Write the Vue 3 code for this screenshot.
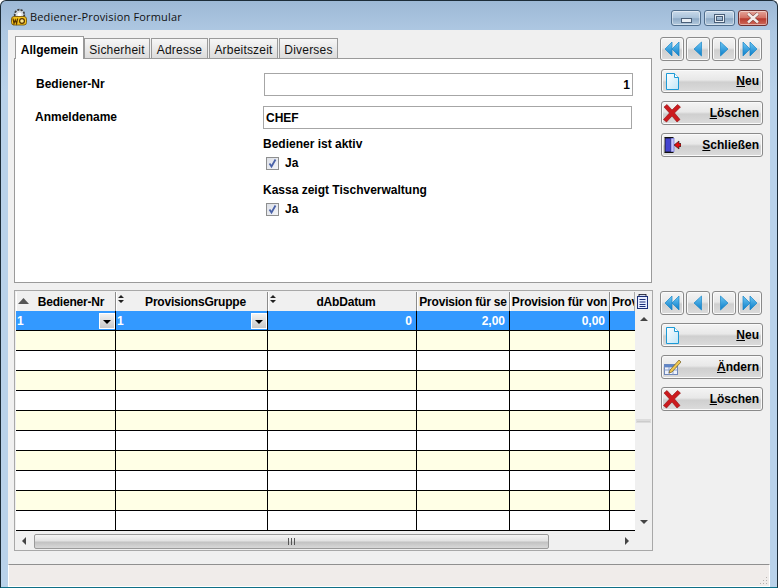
<script setup>
const tabs = [
  { label: 'Allgemein', width: 69, active: true },
  { label: 'Sicherheit', width: 66 },
  { label: 'Adresse', width: 57 },
  { label: 'Arbeitszeit', width: 69 },
  { label: 'Diverses', width: 59 },
]
const columns = [
  { label: 'Bediener-Nr', width: 100, sort: 'up' },
  { label: 'ProvisionsGruppe', width: 152, sort: 'both' },
  { label: 'dAbDatum', width: 149, sort: 'both' },
  { label: 'Provision für se', width: 93 },
  { label: 'Provision für von', width: 100 },
  { label: 'Prov', width: 25, clip: true },
]
const firstRow = [
  { text: '1', drop: true },
  { text: '1', drop: true },
  { text: '0', right: true },
  { text: '2,00', right: true },
  { text: '0,00', right: true },
  { text: '' },
]
const emptyRows = Array.from({ length: 10 }, (_, i) => i)
const navs = ['first', 'prev', 'next', 'last']
const topButtons = [
  { key: 'L0', icon: 'doc', mn: 'N', rest: 'eu' },
  { key: 'L1', icon: 'x', mn: 'L', rest: 'öschen' },
  { key: 'L2', icon: 'door', mn: 'S', rest: 'chließen' },
]
const bottomButtons = [
  { key: 'B0', icon: 'doc', mn: 'N', rest: 'eu' },
  { key: 'B1', icon: 'edit', mn: 'Ä', rest: 'ndern' },
  { key: 'B2', icon: 'x', mn: 'L', rest: 'öschen' },
]
</script>

<template>
  <div class="window">
    <header class="titlebar">
      <svg class="app-icon" width="18" height="18" viewBox="0 0 18 18">
        <circle cx="9.500" cy="6.500" r="4.800" fill="#d8dce0" stroke="#3e3e3e" stroke-width="1.800" stroke-dasharray="2.200 1.100" />
        <circle cx="9.500" cy="6.500" r="2" fill="#fff" />
        <rect x="1.500" y="8.500" width="15" height="8.500" rx="2.500" fill="#f3c21b" stroke="#6b4a00" stroke-width=".8" />
        <path d="M3 10.500l1 5 1.300-3.500 1.300 3.500 1-5" fill="none" stroke="#553300" stroke-width="1.200" />
        <circle cx="12" cy="13" r="2.400" fill="#fbe58a" stroke="#553300" stroke-width="1.200" />
      </svg>
      <span class="title">Bediener-Provision Formular</span>
      <div class="caption-buttons">
        <div class="cap cap-min"><span class="glyph-min"></span></div>
        <div class="cap cap-max"><span class="glyph-max"></span></div>
        <div class="cap cap-close">
          <svg width="16" height="12" viewBox="0 0 16 12">
            <path d="M3 1.500l10 9M13 1.500l-10 9" stroke="#6e3a36" stroke-width="3.600" />
            <path d="M3 1.500l10 9M13 1.500l-10 9" stroke="#f4ece9" stroke-width="2.600" />
          </svg>
        </div>
      </div>
    </header>

    <div class="client">
      <div class="main">
        <div class="left">
          <nav class="tabs">
            <div
              v-for="t in tabs"
              :key="t.label"
              class="tab"
              :class="{ active: t.active }"
              :style="{ width: t.width + 'px' }"
            >{{ t.label }}</div>
          </nav>
          <section class="panel">
            <div class="form-row first">
              <label class="lbl lbl-a">Bediener-Nr</label>
              <div class="input num">1</div>
            </div>
            <div class="form-row second">
              <label class="lbl lbl-b">Anmeldename</label>
              <div class="input text">CHEF</div>
            </div>
            <div class="check-block b1">
              <div class="check-title">Bediener ist aktiv</div>
              <div class="check-line">
                <span class="checkbox">
                  <svg width="11" height="11" viewBox="0 0 11 11"><path d="M2.500 5.500l2 3 4-7" fill="none" stroke="#4a62a8" stroke-width="1.800" /></svg>
                </span>
                <span>Ja</span>
              </div>
            </div>
            <div class="check-block b2">
              <div class="check-title">Kassa zeigt Tischverwaltung</div>
              <div class="check-line">
                <span class="checkbox">
                  <svg width="11" height="11" viewBox="0 0 11 11"><path d="M2.500 5.500l2 3 4-7" fill="none" stroke="#4a62a8" stroke-width="1.800" /></svg>
                </span>
                <span>Ja</span>
              </div>
            </div>
          </section>

          <section class="grid-box">
            <div class="grid-top">
              <div class="thead">
                <div
                  v-for="c in columns"
                  :key="c.label"
                  class="th"
                  :class="{ clip: c.clip, 'has-up': c.sort === 'up', 'has-both': c.sort === 'both' }"
                  :style="{ width: c.width + 'px' }"
                >
                  <svg v-if="c.sort === 'up'" class="sort-up" width="11" height="6" viewBox="0 0 11 6"><path d="M5.500 0L11 6H0z" fill="#555" /></svg>
                  <svg v-if="c.sort === 'both'" class="sort-both" width="6" height="8" viewBox="0 0 6 8"><path d="M3 0l3 3H0zM3 8L0 5h6z" fill="#222" /></svg>
                  <span>{{ c.label }}</span>
                </div>
              </div>
              <div class="corner">
                <svg width="13" height="15" viewBox="0 0 13 15">
                  <rect x="3" y=".5" width="7" height="2" fill="#cfd8f0" stroke="#112" stroke-width=".8" />
                  <rect x="1.500" y="2.500" width="10" height="12" fill="#e8eeff" stroke="#1c2f78" />
                  <path d="M3.500 5.500h6M3.500 8h6M3.500 10.500h6M3.500 12.500h6" stroke="#1c2f78" />
                </svg>
              </div>
            </div>
            <div class="grid-mid">
              <div class="rows">
                <div class="row selected">
                  <div
                    v-for="(c, i) in columns"
                    :key="c.label"
                    class="td"
                    :class="{ right: firstRow[i].right }"
                    :style="{ width: c.width + 'px' }"
                  >
                    <span>{{ firstRow[i].text }}</span>
                    <span v-if="firstRow[i].drop" class="drop">
                      <svg width="8" height="4" viewBox="0 0 8 4"><path d="M0 0h8L4 4z" fill="#000" /></svg>
                    </span>
                  </div>
                </div>
                <div v-for="r in emptyRows" :key="r" class="row" :class="{ cream: r % 2 === 0 }">
                  <div v-for="c in columns" :key="c.label" class="td" :style="{ width: c.width + 'px' }"></div>
                </div>
              </div>
              <div class="vscroll">
                <svg width="8" height="4" viewBox="0 0 8 4"><path d="M4 0l4 4H0z" fill="#444" /></svg>
                <span class="vthumb"></span>
                <svg width="8" height="4" viewBox="0 0 8 4"><path d="M0 0h8L4 4z" fill="#444" /></svg>
              </div>
            </div>
            <div class="hscroll">
              <svg class="harrow" width="4" height="8" viewBox="0 0 4 8"><path d="M4 0v8L0 4z" fill="#444" /></svg>
              <div class="hthumb"><span class="grip"></span></div>
              <svg class="harrow" width="4" height="8" viewBox="0 0 4 8"><path d="M0 0v8l4-4z" fill="#444" /></svg>
            </div>
          </section>
        </div>

        <aside class="side">
          <div class="group">
            <div class="nav-row">
              <button v-for="n in navs" :key="n" class="nav-btn" type="button">
                <svg width="18" height="18" viewBox="0 0 18 18">
                  <defs>
                    <linearGradient :id="'gt' + n" x1="0" y1="0" x2="0" y2="1">
                      <stop offset="0" stop-color="#6fc8f4" /><stop offset="1" stop-color="#0a7cc8" />
                    </linearGradient>
                  </defs>
                  <path v-if="n === 'first'" d="M9 2L2 9l7 7zM16 2L9 9l7 7z" :fill="'url(#gt' + n + ')'" stroke="#1785c8" stroke-width=".7" />
                  <path v-if="n === 'prev'" d="M12.500 2L5 9l7.500 7z" :fill="'url(#gt' + n + ')'" stroke="#1785c8" stroke-width=".7" />
                  <path v-if="n === 'next'" d="M5.500 2L13 9l-7.500 7z" :fill="'url(#gt' + n + ')'" stroke="#1785c8" stroke-width=".7" />
                  <path v-if="n === 'last'" d="M2 2l7 7-7 7zM9 2l7 7-7 7z" :fill="'url(#gt' + n + ')'" stroke="#1785c8" stroke-width=".7" />
                </svg>
              </button>
            </div>
            <button v-for="b in topButtons" :key="b.key" class="cmd" type="button">
              <svg class="ic" width="18" height="20" viewBox="0 0 18 20">
                <defs>
                  <linearGradient :id="'d' + b.key" x1="0" y1="0" x2="1" y2="1">
                    <stop offset="0" stop-color="#ffffff" /><stop offset="1" stop-color="#bfe6f8" />
                  </linearGradient>
                </defs>
                <template v-if="b.icon === 'doc'">
                  <path d="M3.500 2.500h8l4 4v12h-12z" :fill="'url(#d' + b.key + ')'" stroke="#1c9ad6" />
                  <path d="M11.500 2.500v4h4" fill="#fff" stroke="#1c9ad6" />
                </template>
                <path v-if="b.icon === 'x'" d="M1 4l3-2.500 5 5.500 5.500-5.500 3 2.500-6 6 5.500 6.500-3 2.500-5-6-5.500 6-3-2.500 6-6.500z" fill="#cc1a1e" stroke="#8f1010" stroke-width=".6" />
                <template v-if="b.icon === 'door'">
                  <path d="M1.500 2.500h9M1.500 17.500h9" stroke="#111" />
                  <rect x="2" y="3" width="6" height="14" fill="#4444d0" stroke="#111" stroke-width=".8" />
                  <rect x="8" y="3.500" width="3" height="13" fill="#c4c4f6" stroke="#6a6ad8" stroke-width=".7" />
                  <path d="M11 10l5-4v2.500h2v3h-2v2.500z" fill="#e01010" stroke="#111" stroke-width=".6" />
                </template>
              </svg>
              <span class="cmd-text"><u>{{ b.mn }}</u>{{ b.rest }}</span>
            </button>
          </div>

          <div class="group lower">
            <div class="nav-row">
              <button v-for="n in navs" :key="n" class="nav-btn" type="button">
                <svg width="18" height="18" viewBox="0 0 18 18">
                  <defs>
                    <linearGradient :id="'gb' + n" x1="0" y1="0" x2="0" y2="1">
                      <stop offset="0" stop-color="#6fc8f4" /><stop offset="1" stop-color="#0a7cc8" />
                    </linearGradient>
                  </defs>
                  <path v-if="n === 'first'" d="M9 2L2 9l7 7zM16 2L9 9l7 7z" :fill="'url(#gb' + n + ')'" stroke="#1785c8" stroke-width=".7" />
                  <path v-if="n === 'prev'" d="M12.500 2L5 9l7.500 7z" :fill="'url(#gb' + n + ')'" stroke="#1785c8" stroke-width=".7" />
                  <path v-if="n === 'next'" d="M5.500 2L13 9l-7.500 7z" :fill="'url(#gb' + n + ')'" stroke="#1785c8" stroke-width=".7" />
                  <path v-if="n === 'last'" d="M2 2l7 7-7 7zM9 2l7 7-7 7z" :fill="'url(#gb' + n + ')'" stroke="#1785c8" stroke-width=".7" />
                </svg>
              </button>
            </div>
            <button v-for="b in bottomButtons" :key="b.key" class="cmd" type="button">
              <svg class="ic" width="18" height="20" viewBox="0 0 18 20">
                <defs>
                  <linearGradient :id="'d' + b.key" x1="0" y1="0" x2="1" y2="1">
                    <stop offset="0" stop-color="#ffffff" /><stop offset="1" stop-color="#bfe6f8" />
                  </linearGradient>
                </defs>
                <template v-if="b.icon === 'doc'">
                  <path d="M3.500 2.500h8l4 4v12h-12z" :fill="'url(#d' + b.key + ')'" stroke="#1c9ad6" />
                  <path d="M11.500 2.500v4h4" fill="#fff" stroke="#1c9ad6" />
                </template>
                <path v-if="b.icon === 'x'" d="M1 4l3-2.500 5 5.500 5.500-5.500 3 2.500-6 6 5.500 6.500-3 2.500-5-6-5.500 6-3-2.500 6-6.500z" fill="#cc1a1e" stroke="#8f1010" stroke-width=".6" />
                <template v-if="b.icon === 'edit'">
                  <rect x="1.500" y="7.500" width="13" height="10" fill="#eef2fb" stroke="#6f87b8" />
                  <path d="M1.500 10h13M1.500 13h13M6 7.500v10M10 7.500v10" stroke="#8aa0cc" />
                  <rect x="1.500" y="7.500" width="13" height="2.500" fill="#5f86c8" />
                  <path d="M7 13l9-10 2 2-9 10-3 1z" fill="#f0c850" stroke="#705a20" stroke-width=".7" />
                </template>
              </svg>
              <span class="cmd-text"><u>{{ b.mn }}</u>{{ b.rest }}</span>
            </button>
          </div>
        </aside>
      </div>

      <footer class="status">
        <svg class="resize" width="9" height="9" viewBox="0 0 9 9">
          <path d="M7 1h1v1H7zM4 4h1v1H4zM7 4h1v1H7zM1 7h1v1H1zM4 7h1v1H4zM7 7h1v1H7z" fill="#b5b1ae" />
        </svg>
      </footer>
    </div>
  </div>
</template>

<style scoped>
.window {
  box-sizing: border-box;
  width: 778px;
  height: 588px;
  display: flex;
  flex-direction: column;
  background: linear-gradient(180deg, #9db9d6 0, #aec8e2 30px, #b9d2ea 90px, #b9d2ea 100%);
  border: 1px solid #1c2c38;
  border-bottom-color: #0f6f86;
  border-radius: 6px 6px 0 0;
  font-family: "Liberation Sans", Arial, sans-serif;
  font-size: 12px;
  color: #000;
  overflow: hidden;
}
.titlebar {
  height: 29px;
  flex: none;
  display: flex;
  align-items: center;
  padding-left: 9px;
}
.app-icon {
  margin-right: 2px;
  margin-top: 3px;
}
.title {
  font-family: "Open Sans", "Noto Sans", sans-serif;
  font-size: 11px;
  color: #111;
  margin-top: 1px;
  letter-spacing: 0.17px;
}
.caption-buttons {
  margin-left: auto;
  margin-right: 9px;
  margin-top: 5px;
  display: flex;
  gap: 3px;
}
.cap {
  box-sizing: border-box;
  height: 16px;
  border: 1px solid #4f6d8c;
  border-radius: 3px;
  display: flex;
  align-items: center;
  justify-content: center;
  background: linear-gradient(180deg, #c9daea, #a9c2da 50%, #8eaac6 55%, #b4cade);
  box-shadow: inset 0 0 0 1px rgba(255, 255, 255, 0.45);
}
.cap-min { width: 30px; }
.cap-max { width: 31px; }
.cap-close {
  width: 30px;
  border-color: #6e3030;
  background: linear-gradient(180deg, #e4a59a, #d36f62 50%, #b83a2e 55%, #cf6b5c);
}
.glyph-min {
  width: 11px;
  height: 5px;
  margin-top: 4px;
  background: #e8eef4;
  border: 1px solid #4a5f78;
  box-sizing: border-box;
}
.glyph-max {
  width: 11px;
  height: 9px;
  box-sizing: border-box;
  border: 2px solid #e8eef4;
  outline: 1px solid #4a5f78;
  outline-offset: -1px;
  box-shadow: inset 0 0 0 1px #4a5f78;
}
.client {
  flex: 1;
  min-height: 0;
  margin: 0 7px;
  display: flex;
  flex-direction: column;
  background: #f0f0f0;
}
.main {
  flex: 1;
  min-height: 0;
  display: flex;
  padding: 6px 0 0 6px;
}
.left {
  width: 638px;
  flex: none;
}
.tabs {
  display: flex;
  height: 23px;
  align-items: flex-end;
  padding-left: 1px;
  gap: 1px;
  position: relative;
  z-index: 1;
  margin-bottom: -1px;
}
.tab {
  box-sizing: border-box;
  height: 21px;
  border: 1px solid #9a9a9a;
  background: linear-gradient(180deg, #f6f6f6, #dcdcdc);
  text-align: center;
  line-height: 22px;
  letter-spacing: 0.2px;
  color: #111;
}
.tab.active {
  height: 23px;
  margin-right: -1px;
  background: #fff;
  border-bottom: none;
  font-weight: bold;
  line-height: 26px;
  letter-spacing: 0;
  color: #000;
}
.panel {
  box-sizing: border-box;
  height: 225px;
  background: #fff;
  border: 1px solid #9a9a9a;
  font-weight: bold;
}
.form-row {
  display: flex;
  align-items: center;
  height: 23px;
}
.form-row.first { margin-top: 14px; }
.form-row.second { margin-top: 10px; }
.lbl { margin-top: -2px; }
.lbl-a { width: 228px; margin-left: 21px; }
.lbl-b { width: 228px; margin-left: 20px; margin-top: -2px; }
.input {
  box-sizing: border-box;
  width: 369px;
  height: 23px;
  border: 1px solid #a6a6a6;
  background: #fff;
  line-height: 22px;
  padding: 0 2px 0 2px;
}
.input.num { text-align: right; }
.check-block {
  margin-left: 248px;
}
.check-block.b1 { margin-top: 8px; }
.check-block.b2 { margin-top: 13px; }
.check-title {
  height: 14px;
  line-height: 14px;
}
.check-line {
  display: flex;
  align-items: center;
  margin-top: 5px;
  padding-left: 3px;
  height: 14px;
  gap: 6px;
}
.checkbox {
  box-sizing: border-box;
  width: 13px;
  height: 13px;
  border: 1px solid #8e8f8f;
  background: linear-gradient(135deg, #dcdfe6, #f4f5f8);
  display: flex;
  align-items: center;
  justify-content: center;
}
.grid-box {
  box-sizing: border-box;
  margin-top: 7px;
  width: 639px;
  height: 261px;
  border: 1px solid #a8a8a8;
  padding: 1px 1px 2px;
  display: flex;
  flex-direction: column;
  background: #f0f0f0;
}
.grid-top {
  display: flex;
  height: 19px;
  flex: none;
}
.thead {
  display: flex;
  width: 619px;
  overflow: hidden;
}
.th {
  box-sizing: border-box;
  position: relative;
  flex: none;
  height: 19px;
  border-right: 1px solid #8c8c8c;
  box-shadow: inset 1px 0 0 #fff;
  background: #f0f0f0;
  font-weight: bold;
  line-height: 20px;
  letter-spacing: -0.2px;
  text-align: center;
  white-space: nowrap;
  overflow: hidden;
}
.th.has-up { padding-left: 11px; }
.th.has-both { padding-left: 8px; }
.th.clip {
  border-right: none;
  text-align: left;
  padding-left: 2px;
}
.sort-up {
  position: absolute;
  left: 2px;
  top: 6px;
}
.sort-both {
  position: absolute;
  left: 2px;
  top: 3px;
}
.corner {
  width: 17px;
  height: 19px;
  display: flex;
  align-items: center;
  justify-content: center;
  background: #f0f0f0;
  box-shadow: inset 1px 0 0 #aaa;
}
.grid-mid {
  display: flex;
  height: 221px;
  flex: none;
}
.rows {
  width: 619px;
  background: #f0f0f0;
  flex: none;
}
.row {
  display: flex;
  box-sizing: border-box;
  height: 20px;
  background: #fff;
  border-bottom: 1px solid #000;
}
.row.cream { background: #ffffe6; }
.row.selected {
  background: #3399ff;
  color: #fff;
  font-weight: bold;
}
.td {
  box-sizing: border-box;
  flex: none;
  height: 100%;
  border-right: 1px solid #000;
  display: flex;
  align-items: center;
  padding: 0 4px 0 1px;
  overflow: hidden;
  position: relative;
}
.td:last-child { border-right: none; }
.td.right { justify-content: flex-end; }
.drop {
  box-sizing: border-box;
  margin-left: auto;
  margin-right: -4px;
  width: 16px;
  height: 16px;
  border: 1px solid #fff;
  outline: 0;
  background: linear-gradient(180deg, #f2f2f2, #c8c8c8);
  display: flex;
  align-items: center;
  justify-content: center;
}
.drop svg { margin-top: 2px; }
.vscroll {
  flex: none;
  width: 17px;
  display: flex;
  flex-direction: column;
  align-items: center;
  justify-content: space-between;
  padding: 6px 0 7px;
  box-sizing: border-box;
  background: #f0f0f0;
  height: 220px;
}
.vthumb {
  width: 15px;
  height: 4px;
  background: linear-gradient(180deg, #e4e4e4, #c4c4c4);
  border: 1px solid #dcdcdc;
  box-sizing: border-box;
}
.hscroll {
  flex: none;
  margin-top: 1px;
  height: 16px;
  width: 619px;
  display: flex;
  align-items: center;
}
.harrow { margin: 0 6px; flex: none; }
.hthumb {
  box-sizing: border-box;
  margin-left: 2px;
  width: 515px;
  height: 15px;
  border: 1px solid #9a9a9a;
  border-radius: 2px;
  background: linear-gradient(180deg, #f4f4f4, #e2e2e2 45%, #c2c2c2 55%, #d8d8d8);
  display: flex;
  align-items: center;
  justify-content: center;
}
.hscroll .harrow:last-child { margin-left: auto; margin-right: 6px; }
.grip {
  width: 7px;
  height: 7px;
  background: repeating-linear-gradient(90deg, #555 0 1px, transparent 1px 3px);
}
.side {
  width: 103px;
  margin-left: 8px;
  flex: none;
  padding-top: 1px;
}
.group { display: flex; flex-direction: column; }
.group.lower { margin-top: 126px; }
.nav-row {
  display: flex;
  gap: 2px;
  margin-bottom: 8px;
}
.nav-btn {
  box-sizing: border-box;
  width: 24px;
  height: 24px;
  padding: 0;
  border: 1px solid #8a8a8a;
  border-radius: 3px;
  background: linear-gradient(180deg, #f4f4f4, #e8e8e8 45%, #cfcfcf 55%, #dcdcdc);
  box-shadow: inset 0 0 0 1px #fafafa;
  display: flex;
  align-items: center;
  justify-content: center;
}
.cmd {
  box-sizing: border-box;
  margin: 0 0 8px 1px;
  width: 102px;
  height: 24px;
  padding: 0 3px 0 1px;
  border: 1px solid #8a8a8a;
  border-radius: 3px;
  background: linear-gradient(180deg, #f4f4f4, #e8e8e8 45%, #cfcfcf 55%, #dcdcdc);
  box-shadow: inset 0 0 0 1px #fafafa;
  display: flex;
  align-items: center;
  justify-content: space-between;
  font: bold 12px "Liberation Sans", Arial, sans-serif;
  color: #000;
}
.cmd-text { line-height: 14px; }
.ic { flex: none; }
.status {
  flex: none;
  box-sizing: border-box;
  height: 23px;
  border-top: 1px solid #909090;
  border-bottom: 1px solid #fff;
  border-right: 1px solid #fff;
  border-left: 1px solid #fff;
  background: #f0ecea;
  display: flex;
  justify-content: flex-end;
  align-items: flex-end;
  padding: 0 1px 1px 0;
}
</style>

<style>
body { margin: 0; background: #fff; }
</style>
